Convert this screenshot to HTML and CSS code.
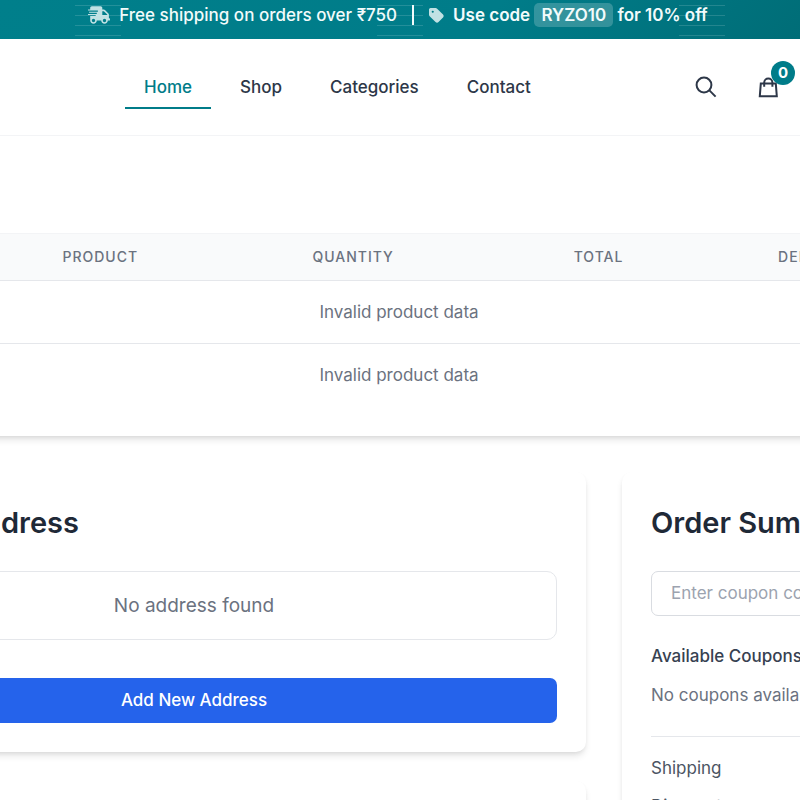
FILE: index.html
```html
<!DOCTYPE html>
<html lang="en">
<head>
<meta charset="utf-8">
<meta name="viewport" content="width=device-width, initial-scale=1">
<title>Cart</title>
<link rel="stylesheet" href="styles.css">
</head>
<body>
<div class="promo">
  <p class="promo-text">
    <svg class="promo-truck" viewBox="0 0 640 512" aria-hidden="true"><path fill="currentColor" d="M624 352h-16V243.900c0-12.700-5.100-24.900-14.100-33.900L494 110.100c-9-9-21.200-14.100-33.900-14.100H416V48c0-26.500-21.500-48-48-48H112C85.500 0 64 21.500 64 48v48H8c-4.400 0-8 3.600-8 8v16c0 4.400 3.600 8 8 8h272c4.400 0 8 3.600 8 8v16c0 4.400-3.600 8-8 8H40c-4.400 0-8 3.600-8 8v16c0 4.400 3.600 8 8 8h208c4.400 0 8 3.600 8 8v16c0 4.400-3.600 8-8 8H8c-4.400 0-8 3.600-8 8v16c0 4.400 3.600 8 8 8h208c4.400 0 8 3.600 8 8v16c0 4.400-3.600 8-8 8H64v128c0 53 43 96 96 96s96-43 96-96h128c0 53 43 96 96 96s96-43 96-96h48c8.800 0 16-7.200 16-16v-32c0-8.800-7.200-16-16-16zM160 464c-26.500 0-48-21.500-48-48s21.500-48 48-48 48 21.500 48 48-21.500 48-48 48zm320 0c-26.500 0-48-21.500-48-48s21.500-48 48-48 48 21.500 48 48-21.500 48-48 48zm80-208H416V144h44.100l99.900 99.900V256z"/></svg>
    <span>Free shipping on orders over ₹750</span>
    <span class="promo-rule"></span>
    <svg class="promo-tag" viewBox="0 0 448 448" aria-hidden="true"><path fill="currentColor" fill-rule="evenodd" d="M0 48v150c0 17 7 33 19 45l176 176c25 25 65 25 90 0l134-134c25-25 25-65 0-90L243 19C231 7 215 0 198 0H48C22 0 0 22 0 48zm112 32a32 32 0 1 1 0 64 32 32 0 0 1 0-64z"/></svg>
    <strong>Use code <span class="promo-code">RYZO10</span> for 10% off</strong>
  </p>
</div>
<header class="header">
  <nav class="nav">
    <a class="nav-link active" href="#">Home</a>
    <a class="nav-link" href="#">Shop</a>
    <a class="nav-link" href="#">Categories</a>
    <a class="nav-link" href="#">Contact</a>
  </nav>
  <div class="actions">
    <button class="icon-button" type="button" aria-label="Search">
      <svg viewBox="0 0 24 24" fill="none" stroke="currentColor" stroke-width="2"><circle cx="10" cy="10" r="7.400"/><path d="M15.400 15.400l6.200 6.200"/></svg>
    </button>
    <button class="icon-button" type="button" aria-label="Bag">
      <svg viewBox="0 0 24 24" fill="none" stroke="currentColor" stroke-width="2"><path d="M4.800 8.600h15l1 12.600h-17zM8.200 11.800V7.600a4.100 4.100 0 0 1 8.200 0v4.200"/></svg>
      <span class="badge">0</span>
    </button>
  </div>
</header>
<main class="main">
  <section class="card cart">
    <table class="cart-table">
      <thead>
        <tr><th class="col-a">Image</th><th class="col-b">Product</th><th class="col-c">Quantity</th><th class="col-a">Total</th><th>Delete</th></tr>
      </thead>
      <tbody>
        <tr><td colspan="5">Invalid product data</td></tr>
        <tr><td colspan="5">Invalid product data</td></tr>
      </tbody>
    </table>
  </section>
  <div class="columns">
    <div class="stack">
      <section class="card">
        <h2 class="title">Shipping Address</h2>
        <p class="empty">No address found</p>
        <button class="primary" type="button">Add New Address</button>
      </section>
      <section class="card">
        <h2 class="title">Payment Method</h2>
      </section>
    </div>
    <section class="card">
      <h2 class="title">Order Summary</h2>
      <input class="coupon" type="text" placeholder="Enter coupon code" aria-label="Coupon code">
      <h3 class="subtitle">Available Coupons</h3>
      <p class="note">No coupons available</p>
      <dl class="totals">
        <dt>Shipping</dt>
        <dt>Discount</dt>
      </dl>
    </section>
  </div>
</main>
</body>
</html>
```
FILE: styles.css
```css
* {
  box-sizing: border-box;
  margin: 0;
  padding: 0;
}

html,
body {
  height: 100%;
  overflow: hidden;
}

body {
  background: #fff;
  color: #1f2937;
  font: 17px/24px Inter, sans-serif;
}

button,
input {
  font: inherit;
}

.promo {
  position: relative;
  height: 39px;
  padding-top: 3px;
  background: linear-gradient(135deg, #007f8b, #007c89 60%, #006d77);
  color: #f2fbfb;
  font-weight: 500;
}

.promo::before {
  --lines: repeating-linear-gradient(rgba(255, 255, 255, 0.14) 0 1px, transparent 1px 10px);
  content: "";
  position: absolute;
  inset: 5px 0 0;
  background: var(--lines) 10% 0 / 46px 31px no-repeat, var(--lines) 50% 0 / 46px 31px no-repeat, var(--lines) 90% 0 / 46px 31px no-repeat;
}

.promo-text {
  position: relative;
  display: flex;
  align-items: center;
  justify-content: center;
  padding-right: 4px;
  white-space: nowrap;
}

.promo-text strong {
  font-weight: 600;
}

.promo-truck {
  width: 22px;
  height: 18px;
  margin-right: 9px;
  opacity: 0.8;
}

.promo-rule {
  width: 2px;
  height: 20px;
  margin: 0 15px;
  background: #f2fbfb;
}

.promo-tag {
  width: 15px;
  height: 15px;
  margin-right: 9px;
  opacity: 0.8;
}

.promo-code {
  display: inline-block;
  padding: 0 7px;
  border-radius: 5px;
  background: rgba(255, 255, 255, 0.2);
}

.header {
  display: flex;
  align-items: center;
  justify-content: space-between;
  height: 97px;
  padding: 0 8px 0 125px;
  border-bottom: 1px solid #f3f4f6;
  background: #fff;
}

.nav {
  display: flex;
  gap: 10px;
}

.nav-link {
  padding: 10px 19px 8px;
  border-bottom: 2px solid transparent;
  color: #2d3748;
  font-weight: 500;
  text-decoration: none;
}

.nav-link.active {
  border-color: #007c89;
  color: #007c89;
}

.actions {
  display: flex;
  gap: 14px;
}

.icon-button {
  position: relative;
  display: grid;
  place-items: center;
  width: 48px;
  height: 48px;
  border: 0;
  background: none;
  color: #2d3748;
}

.icon-button svg {
  width: 24px;
  height: 24px;
}

.badge {
  position: absolute;
  top: -2px;
  right: -3px;
  width: 24px;
  border-radius: 12px;
  background: #007c89;
  color: #fff;
  font-size: 15px;
  font-weight: 700;
}

.main {
  margin: 68px -196px 0 -198px;
}

.card {
  padding: 29px;
  border-radius: 10px;
  background: #fff;
  box-shadow: 0 5px 7px -1px rgba(0, 0, 0, 0.1), 0 2px 5px -2px rgba(0, 0, 0, 0.1);
}

.cart {
  margin-bottom: 36px;
}

.cart-table {
  width: 100%;
  border-collapse: collapse;
  table-layout: fixed;
}

.cart-table th {
  height: 47px;
  padding: 0 27px;
  border-top: 1px solid #f3f4f6;
  border-bottom: 1px solid #e5e7eb;
  background: #f9fafb;
  color: #6b7280;
  font-size: 14px;
  font-weight: 500;
  letter-spacing: 1px;
  line-height: 22px;
  text-align: left;
  text-transform: uppercase;
}

.cart-table td {
  height: 63px;
  color: #6b7280;
  text-align: center;
}

.cart-table tr + tr td {
  border-top: 1px solid #e5e7eb;
}

.col-a {
  width: 18%;
}

.col-b {
  width: 22%;
}

.col-c {
  width: 23%;
}

.columns {
  display: grid;
  grid-template-columns: repeat(3, 1fr);
  gap: 36px;
}

.stack {
  display: grid;
  grid-column: span 2;
  align-content: start;
  gap: 29px;
}

.title {
  margin-bottom: 26px;
  font-size: 29px;
  font-weight: 600;
  line-height: 44px;
}

.empty {
  margin-bottom: 38px;
  padding: 22px;
  border: 1px solid #e5e7eb;
  border-radius: 10px;
  color: #6b7280;
  font-size: 19px;
  line-height: 23px;
  text-align: center;
}

.primary {
  display: block;
  width: 100%;
  height: 45px;
  border: 0;
  border-radius: 7px;
  background: #2563eb;
  color: #fff;
  font-weight: 500;
}

.coupon {
  display: block;
  width: 100%;
  height: 45px;
  margin-bottom: 28px;
  padding: 0 19px;
  border: 1px solid #d9dce1;
  border-radius: 7px;
}

.coupon::placeholder {
  color: #9ca3af;
}

.subtitle {
  margin-bottom: 15px;
  color: #374151;
  font-size: 17px;
  font-weight: 500;
}

.note {
  margin-bottom: 29px;
  color: #6b7280;
}

.totals {
  display: grid;
  gap: 14px;
  padding-top: 19px;
  border-top: 1px solid #e5e7eb;
  color: #4b5563;
}
```
